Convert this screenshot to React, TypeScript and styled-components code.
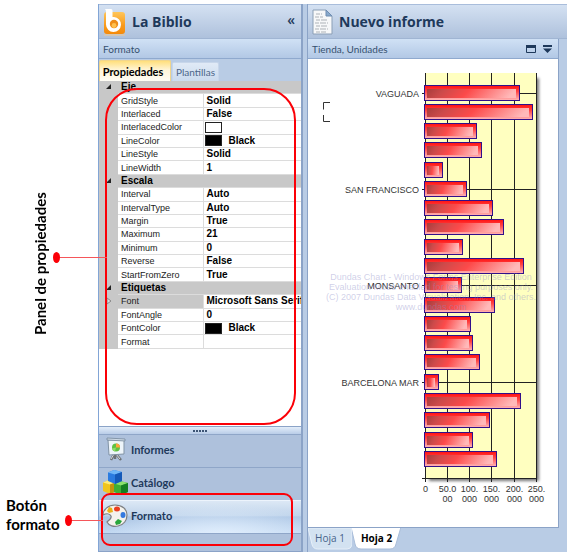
import React from "react";
import styled, { createGlobalStyle, css } from "styled-components";

const Global = createGlobalStyle`
  * { box-sizing: border-box; }
  body { margin: 0; background: #fff; }
  button { font: inherit; color: inherit; border: 0; background: none; padding: 0; cursor: pointer; }
`;

const ui = `"Open Sans", "Noto Sans", sans-serif`;
const small = `Lato, "Open Sans", sans-serif`;
const edge = "#8ba3c7";
const ink = "#1e395b";
const red = "#fb0007";

const Page = styled.div`
  display: flex;
  padding: 4px 0 8px;
  font-family: ${small};
  font-size: 10px;
  color: ${ink};
`;

const Notes = styled.aside`
  display: flex;
  flex-direction: column;
  flex: 0 0 98px;
  color: #000;
  font: 700 15px/19px Lato, sans-serif;
`;

const VerticalNote = styled.p`
  margin: 186px 0 0 31px;
  height: 147px;
  writing-mode: vertical-rl;
  transform: rotate(180deg);
  width: 20px;
  white-space: nowrap;
  text-align: center;
`;

const Note = styled.p`
  margin: 159px 0 0 6px;
  width: 60px;
`;

const Sidebar = styled.section`
  display: flex;
  flex-direction: column;
  flex: 0 0 205px;
  border-left: 1px solid #82a5d6;
  border-right: 2px solid ${edge};
  border-bottom: 1px solid ${edge};
`;

const TitleBar = styled.header`
  display: flex;
  align-items: center;
  height: 35px;
  padding: 0 6px 0 4px;
  gap: 6px;
  background: linear-gradient(#d4e1f2, #aec1dc);
  border-top: 1px solid #a9bddb;
  border-bottom: 1px solid #a0b5d3;
`;

const Title = styled.h1`
  margin: 0;
  flex: 1;
  font: 700 14px/20px ${ui};
  white-space: nowrap;
`;

const Collapse = styled.button`
  padding-bottom: 4px;
  font: 600 14px/16px ${ui};
`;

const SubBar = styled.div`
  display: flex;
  align-items: center;
  gap: 7px;
  height: 20px;
  padding: 0 6px 0 4px;
  background: linear-gradient(#d0e1f5, #b2c8e5);
  border-bottom: 1px solid #8fa9ce;
  color: #35506f;
  line-height: 14px;
`;

const SubTitle = styled.h2`
  margin: 0;
  flex: 1;
  font: 400 10px/14px ${small};
`;

const IconButton = styled.button`
  display: flex;
`;

const TabRow = styled.div`
  display: flex;
  align-items: flex-end;
  gap: 1px;
  height: 22px;
  background: #b9cce5;
`;

const PanelTab = styled.button<{ $active?: boolean }>`
  height: 19px;
  width: 47px;
  border: 1px solid #c7d6ea;
  border-bottom: 0;
  border-radius: 2px 2px 0 0;
  background: linear-gradient(#e0eaf6, #cbdbee);
  color: #4c6689;
  ${(p) =>
    p.$active &&
    css`
      height: 21px;
      width: 72px;
      padding-right: 4px;
      border-color: #f0d58d;
      background: linear-gradient(#ffdf7c, #fff5d8 45%, #fffdf6);
      color: #000;
      font-size: 11px;
      font-weight: 700;
    `}
`;

const GridArea = styled.div`
  position: relative;
  height: 345px;
  background: #fff;
`;

const Ring = styled.div<{ $nav?: boolean }>`
  position: absolute;
  pointer-events: none;
  inset: ${(p) => (p.$nav ? "-7px 8px -13px 2px" : "7px 5px 1px 6px")};
  border: 2px solid ${red};
  border-radius: ${(p) => (p.$nav ? 9 : 32)}px;
  z-index: 2;
`;

const Lead = styled.span<{ $length: number }>`
  position: absolute;
  right: 100%;
  top: 50%;
  width: ${(p) => p.$length}px;
  height: 1px;
  background: #f5565a;
  &::before {
    content: "";
    position: absolute;
    left: -4px;
    top: -5px;
    width: 7px;
    height: 11px;
    border-radius: 50%;
    background: ${red};
  }
`;

const PropertyTable = styled.table`
  width: 100%;
  height: 268px;
  table-layout: fixed;
  border-collapse: collapse;
  background: #fff;
  color: #222;
  font: 9px/12px "Liberation Sans", Arial, sans-serif;
`;

const GutterCol = styled.col`
  width: 19px;
`;

const NameCol = styled.col`
  width: 85px;
`;

const GutterCell = styled.td`
  padding: 0;
  background: #c8c8c8;
  text-align: center;
`;

const CategoryCell = styled.th`
  padding: 0 3px;
  background: #c8c8c8;
  color: #000;
  text-align: left;
  font-size: 10px;
`;

const NameCell = styled.th<{ $selected?: boolean }>`
  padding: 0 3px;
  text-align: left;
  font-weight: 400;
  border: 1px solid #dcdcdc;
  border-left: 0;
  background: ${(p) => (p.$selected ? "#c8c8c8" : "#fff")};
`;

const ValueCell = styled.td`
  padding: 0 0 0 3px;
  border: 1px solid #dcdcdc;
  border-right: 0;
  color: #000;
  font-weight: 700;
  font-size: 10px;
  white-space: nowrap;
  overflow: hidden;
`;

const ColorValue = styled.span`
  display: flex;
  align-items: center;
  gap: 7px;
  margin-left: -2px;
`;

const Swatch = styled.i<{ $fill: string }>`
  width: 17px;
  height: 11px;
  border: 1px solid #222;
  background: ${(p) => p.$fill};
`;

const Arrow = styled.svg`
  display: block;
  margin: 0 auto;
`;

const Splitter = styled.div`
  display: flex;
  justify-content: center;
  align-items: center;
  gap: 1px;
  height: 8px;
  background: linear-gradient(#e3edf9, #b9cde8);
  border-top: 1px solid ${edge};
`;

const Dot = styled.i`
  width: 2px;
  height: 2px;
  background: #3c5474;
`;

const Nav = styled.nav`
  display: flex;
  flex-direction: column;
  background: #aec1dc;
`;

const NavItem = styled.div`
  position: relative;
`;

const NavButton = styled.button<{ $active?: boolean }>`
  display: flex;
  align-items: center;
  gap: 3px;
  width: 100%;
  height: 33px;
  padding: 0 0 3px 4px;
  border-top: 1px solid #8fa6c8;
  font-size: 11px;
  font-weight: 700;
  ${(p) =>
    p.$active &&
    css`
      border-color: #edf4fc;
      background: radial-gradient(ellipse at 60% 110%, #e2effd, transparent 65%),
        linear-gradient(#dce8f5, #c0d4eb 45%, #abc5e4 50%, #c3d9f2);
    `}
`;

const NavFooter = styled.div`
  height: 18px;
  border-top: 1px solid #8fa6c8;
`;

const Main = styled.main`
  display: flex;
  flex-direction: column;
  flex: 1;
  min-width: 0;
  margin-left: 4px;
  border-left: 1px solid ${edge};
  background: #b9cce5;
`;

const Shell = styled.div`
  display: flex;
  flex: 1;
  min-width: 0;
  background: #b9cce5;
`;

const Report = styled.section`
  margin-right: 8px;
  border: 1px solid ${edge};
  border-top: 0;
  border-left: 0;
  background: #fff;
`;

const Chart = styled.svg`
  display: block;
  width: 100%;
  height: 468px;
  font: 9px "Liberation Sans", Arial, sans-serif;
`;

const SheetTabs = styled.div`
  display: flex;
  align-items: flex-start;
  height: 24px;
`;

const SheetTab = styled.button<{ $active?: boolean }>`
  position: relative;
  width: ${(p) => (p.$active ? 49 : 44)}px;
  height: 22px;
  padding-bottom: 2px;
  font-size: ${(p) => (p.$active ? 10 : 10)}px;
  font-family: ${ui};
  color: ${(p) => (p.$active ? "#000" : "#46628a")};
  font-weight: ${(p) => (p.$active ? 700 : 400)};
`;

const SheetShape = styled.svg`
  position: absolute;
  inset: 0;
  width: 100%;
  height: 100%;
`;

const SheetLabel = styled.span`
  position: relative;
`;

const LogoIcon = () => (
  <svg width="23" height="28" viewBox="0 0 23 28" aria-hidden="true">
    <defs>
      <linearGradient id="logo" x2="0" y2="1">
        <stop stopColor="#ffc65a" />
        <stop offset=".6" stopColor="#f89a1c" />
        <stop offset="1" stopColor="#f58a0a" />
      </linearGradient>
    </defs>
    <rect x="1" y="4" width="21" height="22" rx="3" fill="url(#logo)" />
    <path d="M1 27h21" stroke="#f5c98c" />
    <path d="M2 1h6q1.500 0 1.500 1.500V9h1.500a7.500 7.500 0 1 1-8 7.500V4q0-2-1-3z" fill="#fff" />
    <circle cx="11" cy="16" r="4.200" fill="#ee8c18" />
    <circle cx="11" cy="17.500" r="2.400" fill="#ffc04e" />
  </svg>
);

const ReportIcon = () => (
  <svg width="21" height="26" viewBox="0 0 21 26" aria-hidden="true">
    <path d="M1 1h13l6 6v18H1z" fill="#f7f8f9" stroke="#8b9fb6" />
    <path d="M14 1v6h6z" fill="#88a9cc" stroke="#6f8db1" />
    <path
      d="M4 5h6M3 8h8M4 11h12M3 14h13M4 17h11M3 20h13M4 23h10"
      stroke="#c6c9cd"
      strokeWidth="1.500"
      strokeDasharray="4 1 6 1"
    />
  </svg>
);

const BoardIcon = () => (
  <svg width="25" height="27" viewBox="0 0 25 27" aria-hidden="true">
    <path d="M11 18l-3 6M13 18l5 6M12 18v5" stroke="#6d7175" strokeWidth="2.500" />
    <path d="M11 18l-3 5M13 18l4 5" stroke="#d8dadb" />
    <path d="M5 4h16v14l-15 1z" fill="#eef5fa" stroke="#8193a5" />
    <path d="M4 2l18 1v2L4 4z" fill="#cfdbe6" stroke="#75889c" strokeWidth=".8" />
    <circle cx="13" cy="11.500" r="4" fill="#5fc043" />
    <path d="M13 11.500v-4a4 4 0 0 1 4 4z" fill="#ffa33c" />
    <path d="M13 11.500l-4 1a4 4 0 0 0 3 3z" fill="#8fdc6a" />
  </svg>
);

const Cube = ({ x, y, c }: { x: number; y: number; c: [string, string, string] }) => (
  <g transform={`translate(${x} ${y})`}>
    <path d="M0 2.500L6 0l8 2v9l-7 3-7-3z" fill={c[1]} />
    <path d="M0 2.500L6 0l8 2-7 2.500z" fill={c[0]} />
    <path d="M7 4.500L14 2v9l-7 3z" fill={c[2]} />
  </g>
);

const CubesIcon = () => (
  <svg width="25" height="27" viewBox="0 0 25 27" aria-hidden="true">
    <Cube x={0} y={11} c={["#ffec7c", "#f1c51e", "#c3930d"]} />
    <Cube x={11} y={12} c={["#8be06e", "#3fae35", "#157f22"]} />
    <Cube x={5} y={1} c={["#6fb6f8", "#2b7be0", "#1559b8"]} />
  </svg>
);

const PaletteIcon = () => (
  <svg width="25" height="25" viewBox="0 0 25 25" aria-hidden="true">
    <path
      d="M12 2C5 2 0 7 0 12c4-2 7-1 8 1 1 3-2 4-4 6 2 4 7 5 11 4 6-1 9-6 9-11C24 6 19 2 12 2z"
      fill="#f4f2ec"
      stroke="#7d7f82"
      strokeWidth="1.200"
    />
    <path d="M4 8l2-4 3 1 1 4-4 1z" fill="#e9b219" />
    <ellipse cx="14" cy="6" rx="3" ry="2.500" fill="#ea3d20" />
    <ellipse cx="20" cy="12" rx="2.500" ry="3" fill="#3479df" />
    <path d="M12 19l3-3 4 2-2 3-4 1z" fill="#28a63b" />
  </svg>
);

const WindowIcon = () => (
  <svg width="10" height="8" viewBox="0 0 10 8" aria-hidden="true">
    <path d="M.5.500h9v7h-9z" fill="none" stroke={ink} />
    <path d="M0 0h10v3H0z" fill={ink} />
  </svg>
);

const MenuIcon = () => (
  <svg width="9" height="8" viewBox="0 0 9 8" aria-hidden="true">
    <path d="M0 0h9v2H0zM0 3.500h9L4.500 8z" fill={ink} />
  </svg>
);

type Prop = { name: string; value?: string; color?: string; expandable?: boolean };
const groups: { title: string; items: Prop[] }[] = [
  {
    title: "Eje",
    items: [
      { name: "GridStyle", value: "Solid" },
      { name: "Interlaced", value: "False" },
      { name: "InterlacedColor", color: "#fff" },
      { name: "LineColor", value: "Black", color: "#000" },
      { name: "LineStyle", value: "Solid" },
      { name: "LineWidth", value: "1" },
    ],
  },
  {
    title: "Escala",
    items: [
      { name: "Interval", value: "Auto" },
      { name: "IntervalType", value: "Auto" },
      { name: "Margin", value: "True" },
      { name: "Maximum", value: "21" },
      { name: "Minimum", value: "0" },
      { name: "Reverse", value: "False" },
      { name: "StartFromZero", value: "True" },
    ],
  },
  {
    title: "Etiquetas",
    items: [
      { name: "Font", value: "Microsoft Sans Serif", expandable: true },
      { name: "FontAngle", value: "0" },
      { name: "FontColor", value: "Black", color: "#000" },
      { name: "Format" },
    ],
  },
];

const PropertyGrid = () => (
  <PropertyTable>
    <colgroup>
      <GutterCol />
      <NameCol />
      <col />
    </colgroup>
    <tbody>
      {groups.map((g) => (
        <React.Fragment key={g.title}>
          <tr>
            <GutterCell>
              <Arrow width="6" height="6" viewBox="0 0 6 6">
                <path d="M5 0v5H0z" fill="#222" />
              </Arrow>
            </GutterCell>
            <CategoryCell colSpan={2}>{g.title}</CategoryCell>
          </tr>
          {g.items.map((p) => (
            <tr key={p.name}>
              <GutterCell>
                {p.expandable && (
                  <Arrow width="6" height="8" viewBox="0 0 6 8">
                    <path d="M1 1l4 3-4 3z" fill="#ddd" stroke="#888" />
                  </Arrow>
                )}
              </GutterCell>
              <NameCell scope="row" $selected={p.expandable}>
                {p.name}
              </NameCell>
              <ValueCell>
                {p.color ? (
                  <ColorValue>
                    <Swatch $fill={p.color} />
                    {p.value}
                  </ColorValue>
                ) : (
                  p.value
                )}
              </ValueCell>
            </tr>
          ))}
        </React.Fragment>
      ))}
    </tbody>
  </PropertyTable>
);

const bars = [95, 108, 52, 57, 18, 42, 68, 79, 38, 99, 37, 70, 46, 48, 55, 14, 96, 65, 48, 72];
const stores = ["VAGUADA", "SAN FRANCISCO", "MONSANTO", "BARCELONA MAR"];
const ticks = [["0"], ["50.0", "00"], ["100.", "000"], ["150.", "000"], ["200.", "000"], ["250.", "000"]];
const watermark = [
  "Dundas Chart - Windows Forms Enterprise Edition",
  "Evaluation Mode enabled for testing purposes only.",
  "(C) 2007 Dundas Data Visualization, Inc. and others.",
  "www.dundas.com",
];
const tickX = (i: number) => Math.round(116.5 + i * 22.3) + 0.5;
const barY = (i: number) => Math.round(25.5 + i * 19.28) + 0.5;

const UnitsChart = () => (
  <Chart viewBox="0 0 250 468" role="img" aria-label="Tienda, Unidades">
    <defs>
      <linearGradient id="outer" x2="0" y2="1">
        <stop stopColor="#ff1010" />
        <stop offset=".4" stopColor="#ff4444" />
        <stop offset="1" stopColor="#ffb8b8" />
      </linearGradient>
      <linearGradient id="inner" x2="1" y2=".1">
        <stop stopColor="#a83c3c" />
        <stop offset=".2" stopColor="#cc4a4a" />
        <stop offset=".48" stopColor="#fc4a4a" />
        <stop offset="1" stopColor="#ffb9b9" />
      </linearGradient>
      <filter id="soft" x="-10%" width="120%">
        <feGaussianBlur stdDeviation="1.500" />
      </filter>
    </defs>
    <rect x="121" y="19" width="110" height="403" fill="#777" filter="url(#soft)" />
    <rect x="117" y="14" width="111" height="405" fill="#ffffc0" />
    <g stroke="#222">
      {ticks.map((_, i) => (
        <path key={i} d={`M${tickX(i)} 14V423`} />
      ))}
      {stores.map((s, i) => (
        <path key={s} d={`M114 ${barY(i * 5) + 8}H228`} />
      ))}
      <path d="M114 419.500H228" />
    </g>
    {bars.map((w, i) => (
      <g key={i}>
        <rect x="116.500" y={barY(i)} width={w} height="15" fill="url(#outer)" stroke="#30108a" />
        <rect x="119" y={barY(i) + 3.5} width={w - 6} height="9" fill="url(#inner)" />
      </g>
    ))}
    <g fill="#333" textAnchor="end">
      {stores.map((s, i) => (
        <text key={s} x="111" y={barY(i * 5) + 11}>
          {s}
        </text>
      ))}
    </g>
    <g fill="#333" textAnchor="middle">
      {ticks.map((lines, i) =>
        lines.map((t, j) => (
          <text key={t} x={tickX(i)} y={433 + j * 10}>
            {t}
          </text>
        ))
      )}
    </g>
    <g fill="#8c8cc8" fillOpacity=".42" textAnchor="middle">
      {watermark.map((t, i) => (
        <text key={t} x="123" y={221 + i * 10}>
          {t}
        </text>
      ))}
    </g>
    <path d="M22 43.500h-6.500v7M15.500 56v6.500H22" fill="none" stroke="#333" />
  </Chart>
);

const navItems = [
  { label: "Informes", icon: <BoardIcon /> },
  { label: "Catálogo", icon: <CubesIcon /> },
  { label: "Formato", icon: <PaletteIcon />, active: true },
];

export default function App() {
  return (
    <Page>
      <Global />
      <Notes>
        <VerticalNote>Panel de propiedades</VerticalNote>
        <Note>Botón formato</Note>
      </Notes>
      <Shell>
        <Sidebar>
          <TitleBar>
            <LogoIcon />
            <Title>La Biblio</Title>
            <Collapse aria-label="Contraer">«</Collapse>
          </TitleBar>
          <SubBar>
            <SubTitle>Formato</SubTitle>
          </SubBar>
          <TabRow>
            <PanelTab $active>Propiedades</PanelTab>
            <PanelTab>Plantillas</PanelTab>
          </TabRow>
          <GridArea>
            <PropertyGrid />
            <Ring>
              <Lead $length={50} />
            </Ring>
          </GridArea>
          <Splitter>
            {[0, 1, 2, 3, 4].map((i) => (
              <Dot key={i} />
            ))}
          </Splitter>
          <Nav>
            {navItems.map((n) => (
              <NavItem key={n.label}>
                <NavButton $active={n.active}>
                  {n.icon}
                  {n.label}
                </NavButton>
                {n.active && (
                  <Ring $nav>
                    <Lead $length={34} />
                  </Ring>
                )}
              </NavItem>
            ))}
            <NavFooter />
          </Nav>
        </Sidebar>
        <Main>
          <TitleBar>
            <ReportIcon />
            <Title>Nuevo informe</Title>
          </TitleBar>
          <Report>
            <SubBar>
              <SubTitle>Tienda, Unidades</SubTitle>
              <IconButton aria-label="Maximizar">
                <WindowIcon />
              </IconButton>
              <IconButton aria-label="Opciones">
                <MenuIcon />
              </IconButton>
            </SubBar>
            <UnitsChart />
          </Report>
          <SheetTabs>
            <SheetTab>
              <SheetShape viewBox="0 0 45 22" preserveAspectRatio="none">
                <path d="M0 0l4 16q1 5 6 5h30q4 0 5-4V0z" fill="#d3e2f1" stroke="#e7f0f9" />
              </SheetShape>
              <SheetLabel>Hoja 1</SheetLabel>
            </SheetTab>
            <SheetTab $active>
              <SheetShape viewBox="0 0 49 22" preserveAspectRatio="none">
                <path d="M-1-1l4 17q1 5 6 5h29q5 0 6-5l5-17z" fill="#fff" stroke="#a9bdd9" />
              </SheetShape>
              <SheetLabel>Hoja 2</SheetLabel>
            </SheetTab>
          </SheetTabs>
        </Main>
      </Shell>
    </Page>
  );
}
